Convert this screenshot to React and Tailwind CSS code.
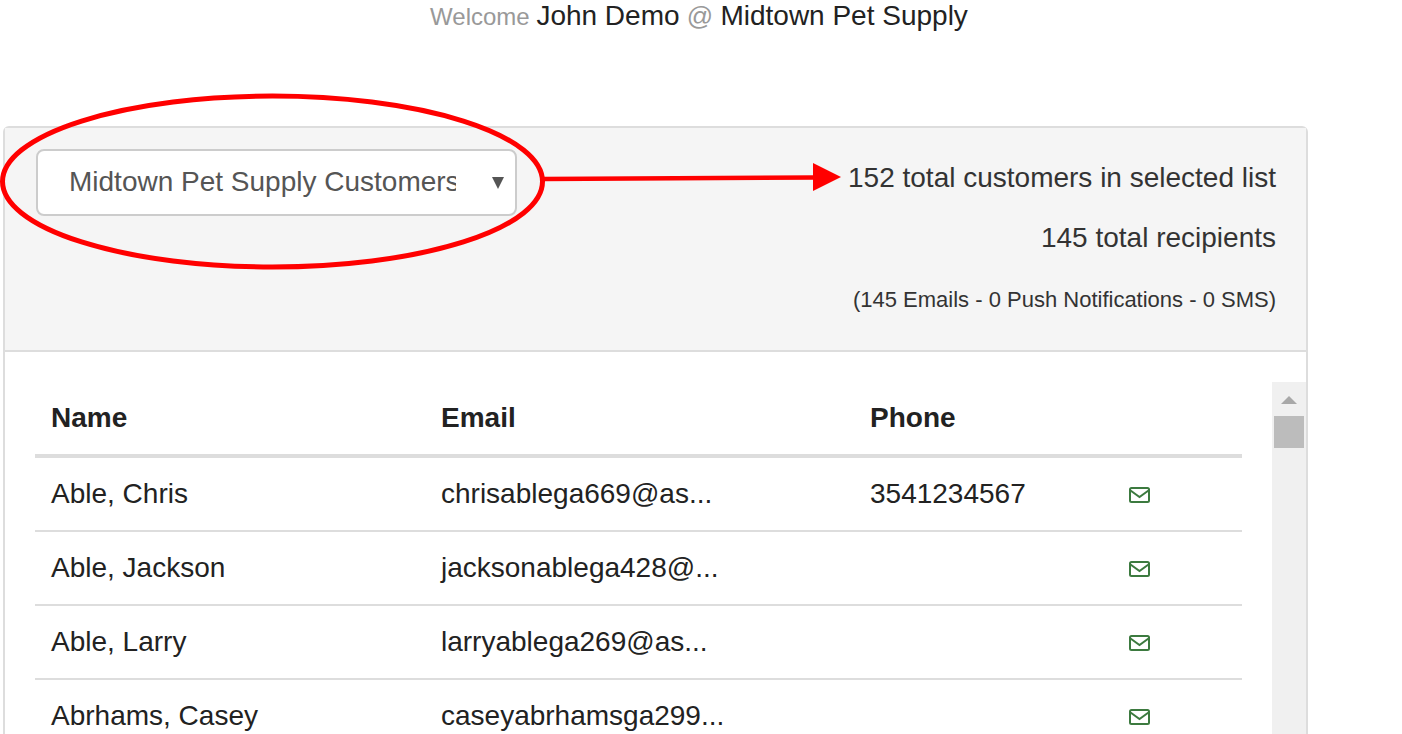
import React from 'react';

const rows = [
  { name: 'Able, Chris', email: 'chrisablega669@as...', phone: '3541234567' },
  { name: 'Able, Jackson', email: 'jacksonablega428@...', phone: '' },
  { name: 'Able, Larry', email: 'larryablega269@as...', phone: '' },
  { name: 'Abrhams, Casey', email: 'caseyabrhamsga299...', phone: '' },
];

const MailIcon = () => (
  <svg width="21" height="16" viewBox="0 0 21 16" fill="none" stroke="#3c7a3f" strokeWidth="2">
    <rect x="1" y="1" width="19" height="14" rx="1.5" />
    <path d="M1.5 3.5 L10.5 10 L19.5 3.5" />
  </svg>
);

const Row = ({ row }) => (
  <div className="flex h-[74px] items-center border-b-2 border-[#ddd] text-[28px] text-[#222]">
    <div className="w-[390px] pl-4">{row.name}</div>
    <div className="w-[429px] pl-4">{row.email}</div>
    <div className="w-[275px] pl-4">{row.phone}</div>
    <div className="pt-0.5"><MailIcon /></div>
  </div>
);

export default function App() {
  return (
    <div className="relative h-[734px] overflow-hidden bg-white font-['Liberation_Sans',Arial,sans-serif]">
      <div className="flex h-[126px] justify-center pr-[4px] text-[28px] leading-[32px] text-[#222]">
        <p>
          <span className="text-[24px] text-[#999]">Welcome </span>John Demo
          <span className="text-[26px] text-[#999]"> @ </span>Midtown Pet Supply
        </p>
      </div>

      <div className="ml-[3px] w-[1305px] rounded-t-md border-2 border-[#ddd]">
        <div className="flex h-[224px] justify-between border-b-2 border-[#ddd] bg-[#f5f5f5] pt-[21px] pr-[30px] pl-[31px]">
          <div className="flex h-[67px] w-[481px] items-center rounded-lg border-2 border-[#ccc] bg-white pl-[31px]">
            <div className="mb-0.5 w-[387px] shrink-0 overflow-hidden whitespace-nowrap text-[28px] text-[#555]">
              Midtown Pet Supply Customers
            </div>
            <svg width="12" height="14" viewBox="0 0 12 14" className="ml-[36px] shrink-0" fill="#555">
              <path d="M0 1 H12 L6 13 Z" />
            </svg>
          </div>
          <div className="text-right text-[#333]">
            <p className="mt-[7px] text-[28px] leading-[44px]">152 total customers in selected list</p>
            <p className="mt-[16px] text-[28px] leading-[44px]">145 total recipients</p>
            <p className="mt-[20px] text-[22px] leading-[40px]">(145 Emails - 0 Push Notifications - 0 SMS)</p>
          </div>
        </div>

        <div className="flex h-[400px] pt-[30px] pl-[30px]">
          <div className="w-[1207px]">
            <div className="flex h-[76px] items-center border-b-4 border-[#ddd] text-[28px] font-bold text-[#222]">
              <div className="w-[390px] pl-4">Name</div>
              <div className="w-[429px] pl-4">Email</div>
              <div className="pl-4">Phone</div>
            </div>
            {rows.map((row) => <Row key={row.name} row={row} />)}
          </div>
          <div className="ml-[30px] w-[34px] bg-[#f0f0f0] pt-[14px]">
            <svg width="16" height="8" viewBox="0 0 16 8" className="mx-auto" fill="#a8a8a8">
              <path d="M8 0 L16 8 H0 Z" />
            </svg>
            <div className="mx-auto mt-[12px] h-[32px] w-[30px] bg-[#bcbcbc]" />
          </div>
        </div>
      </div>

      <svg className="absolute top-0 left-0" width="1402" height="734" fill="none">
        <ellipse cx="272.5" cy="181.5" rx="270" ry="85.5" stroke="#ff0000" strokeWidth="5" />
        <path d="M543 179 L815 177.5" stroke="#ff0000" strokeWidth="4.5" />
        <path d="M813 163 L841 177 L813 191 Z" fill="#ff0000" />
      </svg>
    </div>
  );
}
